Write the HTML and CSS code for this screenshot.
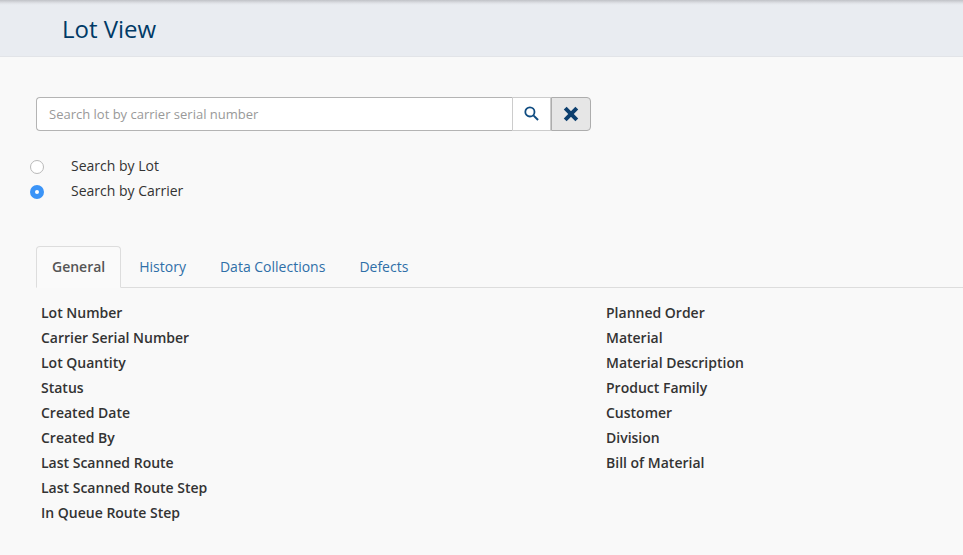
FILE: index.html
```html
<!DOCTYPE html>
<html lang="en">
<head>
    <meta charset="UTF-8">
    <meta name="viewport" content="width=device-width, initial-scale=1.0">
    <title>Lot View</title>
    <link rel="stylesheet" href="styles.css">
</head>
<body>

    <div class="page-header">
        <h1 class="page-title">Lot View</h1>
    </div>

    <div class="content">
        <div class="search-bar">
            <input class="search-input" type="text" placeholder="Search lot by carrier serial number">
            <button class="search-btn">
                <svg width="15" height="15" viewBox="0 0 16 16"><circle cx="6.3" cy="6.3" r="4.9" fill="none" stroke="#0f4c81" stroke-width="1.9"/><path d="M10 10l5 5" stroke="#0f4c81" stroke-width="2.1" fill="none"/></svg>
            </button>
            <button class="clear-btn">
                <svg width="16" height="16" viewBox="0 0 16 16"><path d="M2.2 2.2l11.6 11.6M13.8 2.2L2.2 13.8" stroke="#0d3f6e" stroke-width="4" fill="none"/></svg>
            </button>
        </div>

        <div class="search-options">
            <label class="radio-row"><span class="radio"></span>Search by Lot</label>
            <label class="radio-row"><span class="radio radio-on"></span>Search by Carrier</label>
        </div>

        <div class="tabs">
            <a class="tab tab-active">General</a>
            <a class="tab">History</a>
            <a class="tab">Data Collections</a>
            <a class="tab">Defects</a>
        </div>

        <div class="details">
            <ul class="field-list">
                <li>Lot Number</li>
                <li>Carrier Serial Number</li>
                <li>Lot Quantity</li>
                <li>Status</li>
                <li>Created Date</li>
                <li>Created By</li>
                <li>Last Scanned Route</li>
                <li>Last Scanned Route Step</li>
                <li>In Queue Route Step</li>
            </ul>
            <ul class="field-list">
                <li>Planned Order</li>
                <li>Material</li>
                <li>Material Description</li>
                <li>Product Family</li>
                <li>Customer</li>
                <li>Division</li>
                <li>Bill of Material</li>
            </ul>
        </div>
    </div>

</body>
</html>
```

FILE: styles.css
```css
html, body {
    height: 100%;
}

body {
    font-family: 'Open Sans', sans-serif;
    font-size: 14px;
    line-height: 25px;
    margin: 0;
    padding: 0;
    background-color: #f9f9f9;
    color: #333;
    overflow: hidden;
}

.page-header {
    height: 53px;
    padding-left: 62px;
    background-color: #e9ecf1;
    background-image: linear-gradient(#c0c2c7, #dfe1e6 3px, #e9ecf1 5px);
    border-bottom: 1px solid #e2e4e8;
    padding-top: 3px;
}

.page-title {
    margin: -1px 0 0;
    font-size: 24px;
    font-weight: 400;
    line-height: 53px;
    color: #003a66;
}

.content {
    padding: 40px 0 0 36px;
}

.search-bar {
    display: flex;
    width: 555px;
    height: 34px;
}

.search-input {
    flex: 1;
    min-width: 0;
    padding: 0 12px;
    font-family: inherit;
    font-size: 13px;
    color: #333;
    background-color: #fff;
    border: 1px solid #b4b4b4;
    border-right: 1px solid #ccc;
    border-radius: 4px 0 0 4px;
    outline: none;
}

.search-input::placeholder {
    color: #999;
    opacity: 1;
}

.search-btn,
.clear-btn {
    display: flex;
    align-items: center;
    justify-content: center;
    padding: 0;
    height: 34px;
    background-color: #fff;
    border: 1px solid #ccc;
    border-left: none;
}

.search-btn {
    width: 38px;
    padding-bottom: 2px;
}

.clear-btn {
    width: 40px;
    background-color: #e6e6e6;
    border: 1px solid #adadad;
    border-radius: 0 4px 4px 0;
}

.search-options {
    margin: 22px 0 0 -6px;
}

.radio-row {
    display: flex;
    align-items: center;
}

.radio {
    box-sizing: border-box;
    width: 14px;
    height: 14px;
    margin: 3px 27px 0 0;
    background-color: #fff;
    border: 1px solid #b9b9b9;
    border-radius: 50%;
}

.radio-on {
    background-color: #fff;
    border: 5px solid #3b94f7;
}

.tabs {
    display: flex;
    margin-top: 43px;
    height: 42px;
    box-sizing: border-box;
    border-bottom: 1px solid #ddd;
}

.tab {
    padding: 7px 15px;
    margin-right: 2px;
    height: 41px;
    box-sizing: border-box;
    color: #2f6fa8;
    border: 1px solid transparent;
    border-radius: 4px 4px 0 0;
}

.tab-active {
    height: 42px;
    color: #555;
    font-weight: 600;
    background-color: #fafafa;
    border-color: #ddd;
    border-bottom-color: #fafafa;
}

.details {
    display: grid;
    grid-template-columns: 565px 1fr;
    padding: 12px 0 0 5px;
}

.field-list {
    margin: 0;
    padding: 0;
    list-style: none;
    font-weight: 600;
}
```
